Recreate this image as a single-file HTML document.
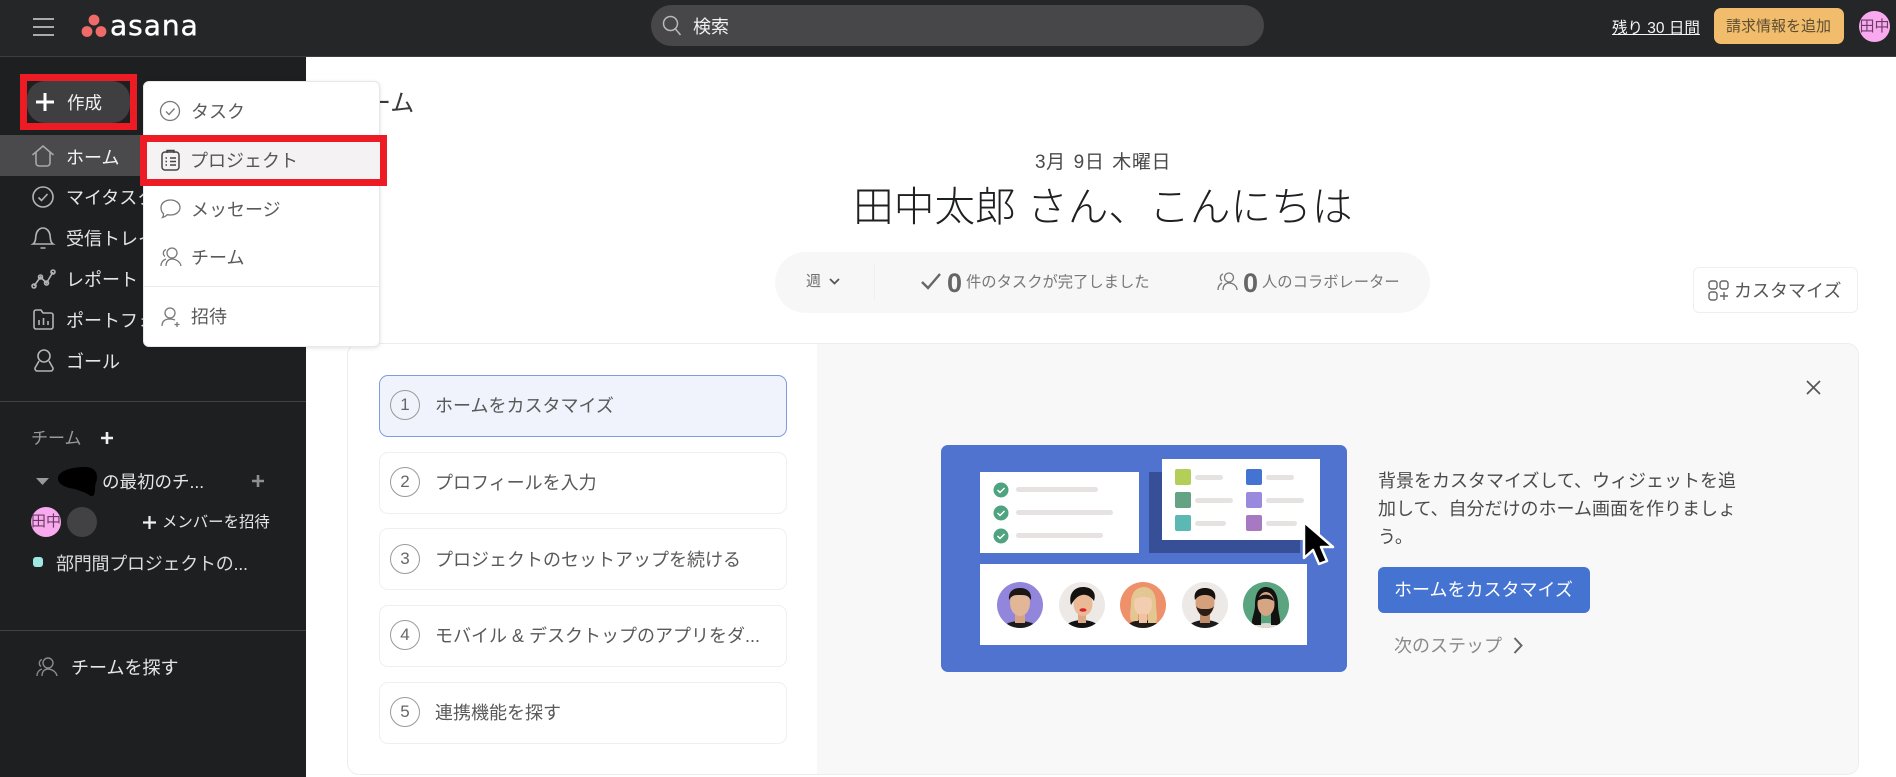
<!DOCTYPE html>
<html lang="ja"><head><meta charset="utf-8"><title>Asana ホーム</title>
<style>
html,body{margin:0;padding:0;width:1896px;height:777px;overflow:hidden;background:#fff}
body{position:relative;font-family:"Liberation Sans","Noto Sans CJK JP",sans-serif;font-weight:400;color:#4a4a4a}
.a{position:absolute;box-sizing:border-box}
.t{position:absolute;white-space:nowrap;line-height:30px;height:30px;font-size:18px}
svg{position:absolute;overflow:visible}
.side{color:#e6e6e6}
.step{position:absolute;left:379px;width:406px;height:60px;border:1px solid #efefef;border-radius:9px;background:#fff}
.num{position:absolute;left:390px;width:30px;height:30px;box-sizing:border-box;border:1.5px solid #9a9a9a;border-radius:50%;text-align:center;line-height:27px;font-size:17px;color:#666}
.st{left:435px;color:#595959}
.bar{position:absolute;height:5px;background:#e6e2e2;border-radius:3px}
.sq{position:absolute;width:16px;height:16px;border-radius:2px}
</style></head><body>

<!-- top bar -->
<div class="a" style="left:0;top:0;width:1896px;height:57px;background:#252628;border-bottom:1px solid #3e3e40"></div>
<svg style="left:33px;top:17px" width="21" height="20"><path d="M0 2h21M0 10h21M0 18h21" stroke="#bdbdbd" stroke-width="1.700"/></svg>
<svg style="left:81px;top:14px" width="26" height="24"><circle cx="13" cy="6" r="5.400" fill="#f06a6a"/><circle cx="6" cy="17.500" r="5.400" fill="#f06a6a"/><circle cx="20" cy="17.500" r="5.400" fill="#f06a6a"/></svg>
<div class="t" style="left:110px;top:10px;font-size:28px;color:#fff;letter-spacing:1px;line-height:32px;height:32px;font-family:'DejaVu Sans',sans-serif;-webkit-text-stroke:.4px #fff">asana</div>
<div class="a" style="left:651px;top:5px;width:613px;height:41px;background:#474749;border-radius:21px"></div>
<svg style="left:662px;top:15px" width="20" height="22" fill="none" stroke="#b8b8b8" stroke-width="1.500"><circle cx="8.500" cy="8.500" r="7"/><path d="M13.500 14l5 6"/></svg>
<div class="t" style="left:693px;top:12px;color:#f0f0f0;font-size:18px">検索</div>
<div class="t" style="left:1612px;top:14px;color:#f5f5f5;font-size:15.500px;text-decoration:underline">残り 30 日間</div>
<div class="a" style="left:1714px;top:8px;width:130px;height:36px;background:#f1bd6c;border-radius:7px"></div>
<div class="t" style="left:1726px;top:12px;color:#5c4d33;font-size:15px">請求情報を追加</div>
<div class="a" style="left:1859px;top:11px;width:31px;height:31px;border-radius:50%;background:#f9aaef;color:#6a3d67;font-size:15px;line-height:31px;text-align:center;white-space:nowrap;overflow:visible">田中</div>

<!-- sidebar -->
<div class="a" style="left:0;top:57px;width:306px;height:720px;background:#1e1f21"></div>
<div class="a" style="left:20px;top:74px;width:117px;height:56px;border:7px solid #ed1c24;background:#1e1f21"></div>
<div class="a" style="left:27px;top:81px;width:103px;height:42px;background:#3f3f41;border-radius:18px"></div>
<svg style="left:35px;top:92px" width="20" height="20"><path d="M10 1v18M1 10h18" stroke="#fff" stroke-width="3"/></svg>
<div class="t" style="left:67px;top:88px;color:#f0f0f0;font-size:17.500px">作成</div>

<div class="a" style="left:0;top:135px;width:306px;height:41px;background:#4a4a4c"></div>
<svg style="left:31px;top:144px" width="24" height="24" fill="none" stroke="#a8a8a8" stroke-width="1.600"><path d="M1.500 11L12 2l10.500 9M5 8.500V19a3 3 0 0 0 3 3h8a3 3 0 0 0 3-3V8.500"/></svg>
<div class="t side" style="left:66px;top:143px;color:#f2f2f2">ホーム</div>
<svg style="left:32px;top:186px" width="22" height="22" fill="none" stroke="#b4b4b4" stroke-width="1.600"><circle cx="11" cy="11" r="10"/><path d="M6.500 11.500l3 3 6-6.500"/></svg>
<div class="t side" style="left:66px;top:183px">マイタスク</div>
<svg style="left:32px;top:226px" width="22" height="24" fill="none" stroke="#b4b4b4" stroke-width="1.600"><path d="M1 18c3-2 2.500-6 3-9 .6-4 3.500-7 7-7s6.400 3 7 7c.5 3 0 7 3 9zM8.500 22h5"/></svg>
<div class="t side" style="left:66px;top:224px">受信トレイ</div>
<svg style="left:31px;top:268px" width="25" height="22" fill="none" stroke="#b4b4b4" stroke-width="1.600"><path d="M3 18L9.500 9l6 6L22 4"/><circle cx="3" cy="18" r="2"/><circle cx="9.500" cy="9" r="2"/><circle cx="15.500" cy="15" r="2"/><circle cx="22" cy="4" r="2"/></svg>
<div class="t side" style="left:66px;top:265px">レポート</div>
<svg style="left:33px;top:309px" width="21" height="21" fill="none" stroke="#b4b4b4" stroke-width="1.600"><path d="M3 1h5l2 3h8a2 2 0 0 1 2 2v12a2 2 0 0 1-2 2H3a2 2 0 0 1-2-2V3a2 2 0 0 1 2-2zM6 11v5M10.500 9v7M15 12v4"/></svg>
<div class="t side" style="left:66px;top:306px">ポートフォリオ</div>
<svg style="left:33px;top:349px" width="22" height="24" fill="none" stroke="#b4b4b4" stroke-width="1.600"><circle cx="11" cy="7" r="6"/><path d="M6 12L2 19a2.500 2.500 0 0 0 2 3h14a2.500 2.500 0 0 0 2-3l-4-7"/></svg>
<div class="t side" style="left:66px;top:347px">ゴール</div>

<div class="a" style="left:0;top:401px;width:306px;height:1px;background:#424244"></div>
<div class="t" style="left:31px;top:424px;color:#9a9a9a;font-size:17px">チーム</div>
<svg style="left:100px;top:431px" width="14" height="14"><path d="M7 1v12M1 7h12" stroke="#f0f0f0" stroke-width="2.600"/></svg>
<svg style="left:36px;top:478px" width="14" height="8"><path d="M0 0h13L6.500 7z" fill="#9a9a9a"/></svg>
<svg style="left:57px;top:467px" width="42" height="32"><path d="M1 10C4 2 18 0 28 0c8 0 12 4 12 10 0 5-2 6-2 12 0 6-2 9-6 6-4-3-9-4-14-6C10 21 0 18 1 10z" fill="#000"/></svg>
<div class="t side" style="left:102px;top:467px;font-size:17.500px">の最初のチ...</div>
<svg style="left:251px;top:474px" width="14" height="14"><path d="M7 1v12M1 7h12" stroke="#8f8f8f" stroke-width="2.600"/></svg>
<div class="a" style="left:31px;top:507px;width:30px;height:30px;border-radius:50%;background:#f9aaef;color:#6a3d67;font-size:15px;line-height:30px;text-align:center;white-space:nowrap">田中</div>
<div class="a" style="left:67px;top:507px;width:30px;height:30px;border-radius:50%;background:#424244"></div>
<svg style="left:143px;top:516px" width="13" height="13"><path d="M6.500 0v13M0 6.500h13" stroke="#f0f0f0" stroke-width="2.200"/></svg>
<div class="t side" style="left:162px;top:508px;font-size:15.400px">メンバーを招待</div>
<div class="a" style="left:33px;top:557px;width:10px;height:10px;border-radius:3px;background:#9ee7e3"></div>
<div class="t side" style="left:56px;top:549px;font-size:18px;color:#dcdcdc;letter-spacing:-.25px">部門間プロジェクトの...</div>
<div class="a" style="left:0;top:630px;width:306px;height:1px;background:#424244"></div>
<svg style="left:36px;top:657px" width="22" height="20" fill="none" stroke="#8a8a8a" stroke-width="1.400"><circle cx="12" cy="6" r="5"/><path d="M6 2.500a4 4 0 0 0-1 7M1 19c0-4 2-6 5-7M6 19c0-5 3-7 6-7s8 2 9 7"/></svg>
<div class="t side" style="left:71px;top:653px">チームを探す</div>

<!-- main heading -->
<div class="t" style="left:343px;top:89px;font-size:24px;color:#3a3a3a">ホーム</div>
<div class="t" style="left:1035px;top:148px;font-size:19px;letter-spacing:.6px;word-spacing:2px;color:#4a4a4a">3月 9日 木曜日</div>
<div class="a" style="left:853px;top:178px;font-size:40.700px;line-height:58px;white-space:nowrap;color:#1e1f21;font-weight:300">田中太郎 さん、こんにちは</div>

<!-- stats -->
<div class="a" style="left:775px;top:252px;width:655px;height:61px;background:#f7f7f7;border-radius:31px"></div>
<div class="a" style="left:874px;top:264px;width:1px;height:36px;background:#efefef"></div>
<div class="t" style="left:806px;top:267px;font-size:15px;color:#6d6e6f">週</div>
<svg style="left:829px;top:278px" width="11" height="8" fill="none" stroke="#555" stroke-width="1.800"><path d="M1 1l4.500 4.500L10 1"/></svg>
<svg style="left:921px;top:272px" width="20" height="18" fill="none" stroke="#666" stroke-width="2.400"><path d="M1 10l6 6L19 2"/></svg>
<div class="t" style="left:947px;top:268px;font-size:27px;color:#666;font-weight:700">0</div>
<div class="t" style="left:966px;top:268px;font-size:15.300px;color:#777">件のタスクが完了しました</div>
<svg style="left:1217px;top:272px" width="21" height="19" fill="none" stroke="#777" stroke-width="1.300"><circle cx="12" cy="5.500" r="4.500"/><path d="M6 2a4 4 0 0 0-1 7M1 18c0-4 2-6 4-7M6 18c0-5 3-7 6-7s8 2 8 7"/></svg>
<div class="t" style="left:1243px;top:268px;font-size:27px;color:#666;font-weight:700">0</div>
<div class="t" style="left:1262px;top:268px;font-size:15.300px;color:#777">人のコラボレーター</div>

<!-- customize -->
<div class="a" style="left:1693px;top:267px;width:165px;height:46px;border:1px solid #efefef;border-radius:6px;background:#fff"></div>
<svg style="left:1708px;top:280px" width="22" height="21" fill="none" stroke="#666" stroke-width="1.400"><rect x="1" y="1" width="8" height="8" rx="2.500"/><rect x="12" y="1" width="8" height="8" rx="2.500"/><rect x="1" y="12" width="8" height="8" rx="2.500"/><path d="M16 12v8M12 16h8"/></svg>
<div class="t" style="left:1734px;top:276px;font-size:18px;color:#555">カスタマイズ</div>

<!-- panel -->
<div class="a" style="left:347px;top:343px;width:1512px;height:432px;border:1px solid #ededed;border-radius:12px;background:#fff;overflow:hidden">
 <div class="a" style="left:469px;top:0;width:1042px;height:431px;background:#f8f8f8"></div>
</div>
<div class="step" style="top:375px;background:#f1f3fc;border-color:#7e9ed9"></div>
<div class="step" style="top:452px"></div>
<div class="step" style="top:528px"></div>
<div class="step" style="top:605px"></div>
<div class="step" style="top:682px"></div>
<div class="num" style="top:390px">1</div><div class="t st" style="top:391px">ホームをカスタマイズ</div>
<div class="num" style="top:467px">2</div><div class="t st" style="top:468px">プロフィールを入力</div>
<div class="num" style="top:544px">3</div><div class="t st" style="top:545px">プロジェクトのセットアップを続ける</div>
<div class="num" style="top:620px">4</div><div class="t st" style="top:621px">モバイル &amp; デスクトップのアプリをダ...</div>
<div class="num" style="top:697px">5</div><div class="t st" style="top:698px">連携機能を探す</div>

<!-- illustration -->
<div class="a" style="left:941px;top:445px;width:406px;height:227px;background:#4f73cf;border-radius:7px"></div>
<div class="a" style="left:980px;top:472px;width:159px;height:81px;background:#fff"></div>
<svg style="left:993px;top:482px" width="16" height="62"><g fill="#4fa381"><circle cx="8" cy="8" r="7.500"/><circle cx="8" cy="31" r="7.500"/><circle cx="8" cy="54" r="7.500"/></g><path d="M4.500 8l2.500 2.500 4.500-4.500M4.500 31l2.500 2.500 4.500-4.500M4.500 54l2.500 2.500 4.500-4.500" fill="none" stroke="#fff" stroke-width="1.500"/></svg>
<div class="bar" style="left:1016px;top:487px;width:82px"></div>
<div class="bar" style="left:1016px;top:510px;width:97px"></div>
<div class="bar" style="left:1016px;top:533px;width:87px"></div>
<div class="a" style="left:1149px;top:472px;width:151px;height:81px;background:#364f96"></div>
<div class="a" style="left:1162px;top:459px;width:158px;height:81px;background:#fff"></div>
<div class="sq" style="left:1175px;top:469px;background:#b3cf5a"></div><div class="bar" style="left:1195px;top:475px;width:28px"></div>
<div class="sq" style="left:1175px;top:492px;background:#64a384"></div><div class="bar" style="left:1195px;top:498px;width:38px"></div>
<div class="sq" style="left:1175px;top:515px;background:#5cb8b2"></div><div class="bar" style="left:1195px;top:521px;width:31px"></div>
<div class="sq" style="left:1246px;top:469px;background:#4573d2"></div><div class="bar" style="left:1266px;top:475px;width:28px"></div>
<div class="sq" style="left:1246px;top:492px;background:#9a8ade"></div><div class="bar" style="left:1266px;top:498px;width:38px"></div>
<div class="sq" style="left:1246px;top:515px;background:#a679c2"></div><div class="bar" style="left:1266px;top:521px;width:31px"></div>
<div class="a" style="left:980px;top:564px;width:327px;height:81px;background:#fff"></div>
<svg style="left:997px;top:581px" width="295" height="48" viewBox="0 0 295 48">
 <defs>
  <clipPath id="c1"><circle cx="23" cy="24" r="23"/></clipPath><clipPath id="c2"><circle cx="85" cy="24" r="23"/></clipPath><clipPath id="c3"><circle cx="146" cy="24" r="23"/></clipPath><clipPath id="c4"><circle cx="208" cy="24" r="23"/></clipPath><clipPath id="c5"><circle cx="269" cy="24" r="23"/></clipPath>
 </defs>
 <circle cx="23" cy="24" r="23" fill="#9186dc"/>
 <g clip-path="url(#c1)"><ellipse cx="23" cy="50" rx="19" ry="10" fill="#1d1b1b"/><rect x="18" y="30" width="10" height="12" fill="#d7a583"/><ellipse cx="23" cy="22" rx="10" ry="13" fill="#e2b797"/><path d="M12 19c-1-9 5-12 11-12s12 3 11 12c-3-5-6-5-11-5s-8 0-11 5z" fill="#1c1614"/></g>
 <circle cx="85" cy="24" r="23" fill="#ece9e7"/>
 <g clip-path="url(#c2)"><ellipse cx="85" cy="50" rx="19" ry="11" fill="#141313"/><rect x="81" y="31" width="8" height="11" fill="#dba785"/><ellipse cx="86" cy="23" rx="9.500" ry="12" fill="#eab996"/><path d="M74 24c-3-12 4-18 12-18s14 5 11 14c-3-4-7-7-12-6-5 1-8 5-11 10z" fill="#141111"/><ellipse cx="86" cy="29" rx="3.500" ry="1.800" fill="#d9232b"/></g>
 <circle cx="146" cy="24" r="23" fill="#ee9069"/>
 <g clip-path="url(#c3)"><ellipse cx="146" cy="50" rx="19" ry="11" fill="#201c1a"/><path d="M134 22c0-12 7-16 13-16s12 5 12 16c0 8 2 14 0 20h-8V20h-10v20h-7c-2-6 0-12 0-18z" fill="#e3c791"/><ellipse cx="146" cy="23" rx="9" ry="12" fill="#f3cdb0"/><rect x="142" y="33" width="8" height="9" fill="#efc4a4"/><path d="M138 18c2-8 14-10 17 0-5-3-12-3-17 0z" fill="#e3c791"/></g>
 <circle cx="208" cy="24" r="23" fill="#ece9e7"/>
 <g clip-path="url(#c4)"><ellipse cx="208" cy="50" rx="19" ry="11" fill="#1d1b1b"/><rect x="203" y="30" width="10" height="12" fill="#c28d6a"/><ellipse cx="208" cy="22" rx="9.500" ry="13" fill="#d5a17d"/><path d="M198 19c-2-9 4-12 10-12s12 3 10 12c-3-4-6-5-10-5s-7 1-10 5z" fill="#18120f"/><path d="M199 25c2 6 4 10 9 10s7-4 9-10c-2 3-5 3-9 3s-7 0-9-3z" fill="#2b1e17"/></g>
 <circle cx="269" cy="24" r="23" fill="#5aa47f"/>
 <g clip-path="url(#c5)"><ellipse cx="269" cy="52" rx="16" ry="10" fill="#dfd9d3"/><path d="M258 24c0-13 5-18 11-18s12 5 12 18c0 8 3 14 2 20h-9V22h-10v22h-9c-1-6 3-12 3-20z" fill="#141111"/><ellipse cx="269" cy="23" rx="8.500" ry="12" fill="#d6a584"/><path d="M260 20c2-8 15-9 17 0-5-3-12-3-17 0z" fill="#141111"/></g>
</svg>
<svg style="left:1302px;top:520px" width="30" height="46"><path d="M2 2v36l9-8 6 14 8-3-6-14h12z" fill="#000" stroke="#fff" stroke-width="2.500" stroke-linejoin="round"/></svg>

<!-- right text -->
<div class="t" style="left:1378px;top:466px;color:#4a4a4a">背景をカスタマイズして、ウィジェットを追</div>
<div class="t" style="left:1378px;top:494px;color:#4a4a4a">加して、自分だけのホーム画面を作りましょ</div>
<div class="t" style="left:1378px;top:522px;color:#4a4a4a">う。</div>
<div class="a" style="left:1378px;top:567px;width:212px;height:46px;background:#4573d2;border-radius:6px"></div>
<div class="t" style="left:1394px;top:575px;color:#fff">ホームをカスタマイズ</div>
<div class="t" style="left:1394px;top:631px;color:#8a8a8a">次のステップ</div>
<svg style="left:1513px;top:637px" width="10" height="17" fill="none" stroke="#666" stroke-width="2"><path d="M1.500 1l7 7.500-7 7.500"/></svg>
<svg style="left:1806px;top:380px" width="15" height="15" fill="none" stroke="#555" stroke-width="1.700"><path d="M1 1l13 13M14 1L1 14"/></svg>

<!-- dropdown menu -->
<div class="a" style="left:143px;top:81px;width:237px;height:266px;background:#fff;border-radius:6px;border:1px solid #e8e8e8;box-shadow:0 1px 4px rgba(0,0,0,.12)"></div>
<div class="a" style="left:143px;top:286px;width:237px;height:1px;background:#ececec"></div>
<svg style="left:160px;top:101px" width="20" height="20" fill="none" stroke="#777" stroke-width="1.300"><circle cx="10" cy="10" r="9.500"/><path d="M6 10.500l3 3 5.500-6"/></svg>
<div class="t" style="left:191px;top:97px;color:#5a5a5a">タスク</div>
<div class="a" style="left:140px;top:135px;width:247px;height:51px;background:#f5f2f3;border:7px solid #ed1c24"></div>
<svg style="left:161px;top:149px" width="19" height="22" fill="none" stroke="#444" stroke-width="1.500"><rect x="1" y="3" width="17" height="18" rx="3"/><path d="M6 4V1.500h7V4M9 9h6M9 12.500h6M9 16h6M4.500 9h1.500M4.500 12.500h1.500M4.500 16h1.500"/></svg>
<div class="t" style="left:190px;top:146px;color:#555">プロジェクト</div>
<svg style="left:160px;top:199px" width="21" height="20" fill="none" stroke="#777" stroke-width="1.300"><path d="M10.500 1c5 0 9.500 3 9.500 7.500S15.500 16 10.500 16c-1 0-2-.1-3-.4C6 17 4.500 18 2.500 18.500c.8-1.300 1.200-2.500 1-3.800C1.800 13.300 1 11 1 8.500 1 4 5.500 1 10.500 1z"/></svg>
<div class="t" style="left:191px;top:195px;color:#5a5a5a">メッセージ</div>
<svg style="left:160px;top:247px" width="22" height="20" fill="none" stroke="#777" stroke-width="1.300"><circle cx="12" cy="6" r="5"/><path d="M6 2.500a4 4 0 0 0-1 7M1 19c0-4 2-6 5-7M6 19c0-5 3-7 6-7s8 2 9 7"/></svg>
<div class="t" style="left:191px;top:243px;color:#5a5a5a">チーム</div>
<svg style="left:161px;top:307px" width="21" height="20" fill="none" stroke="#777" stroke-width="1.300"><circle cx="9" cy="6" r="5"/><path d="M1 19c0-5 3-7 8-7 2 0 3.500.4 5 1M16 15v5M13.500 17.500h5"/></svg>
<div class="t" style="left:191px;top:302px;color:#5a5a5a">招待</div>
</body></html>
